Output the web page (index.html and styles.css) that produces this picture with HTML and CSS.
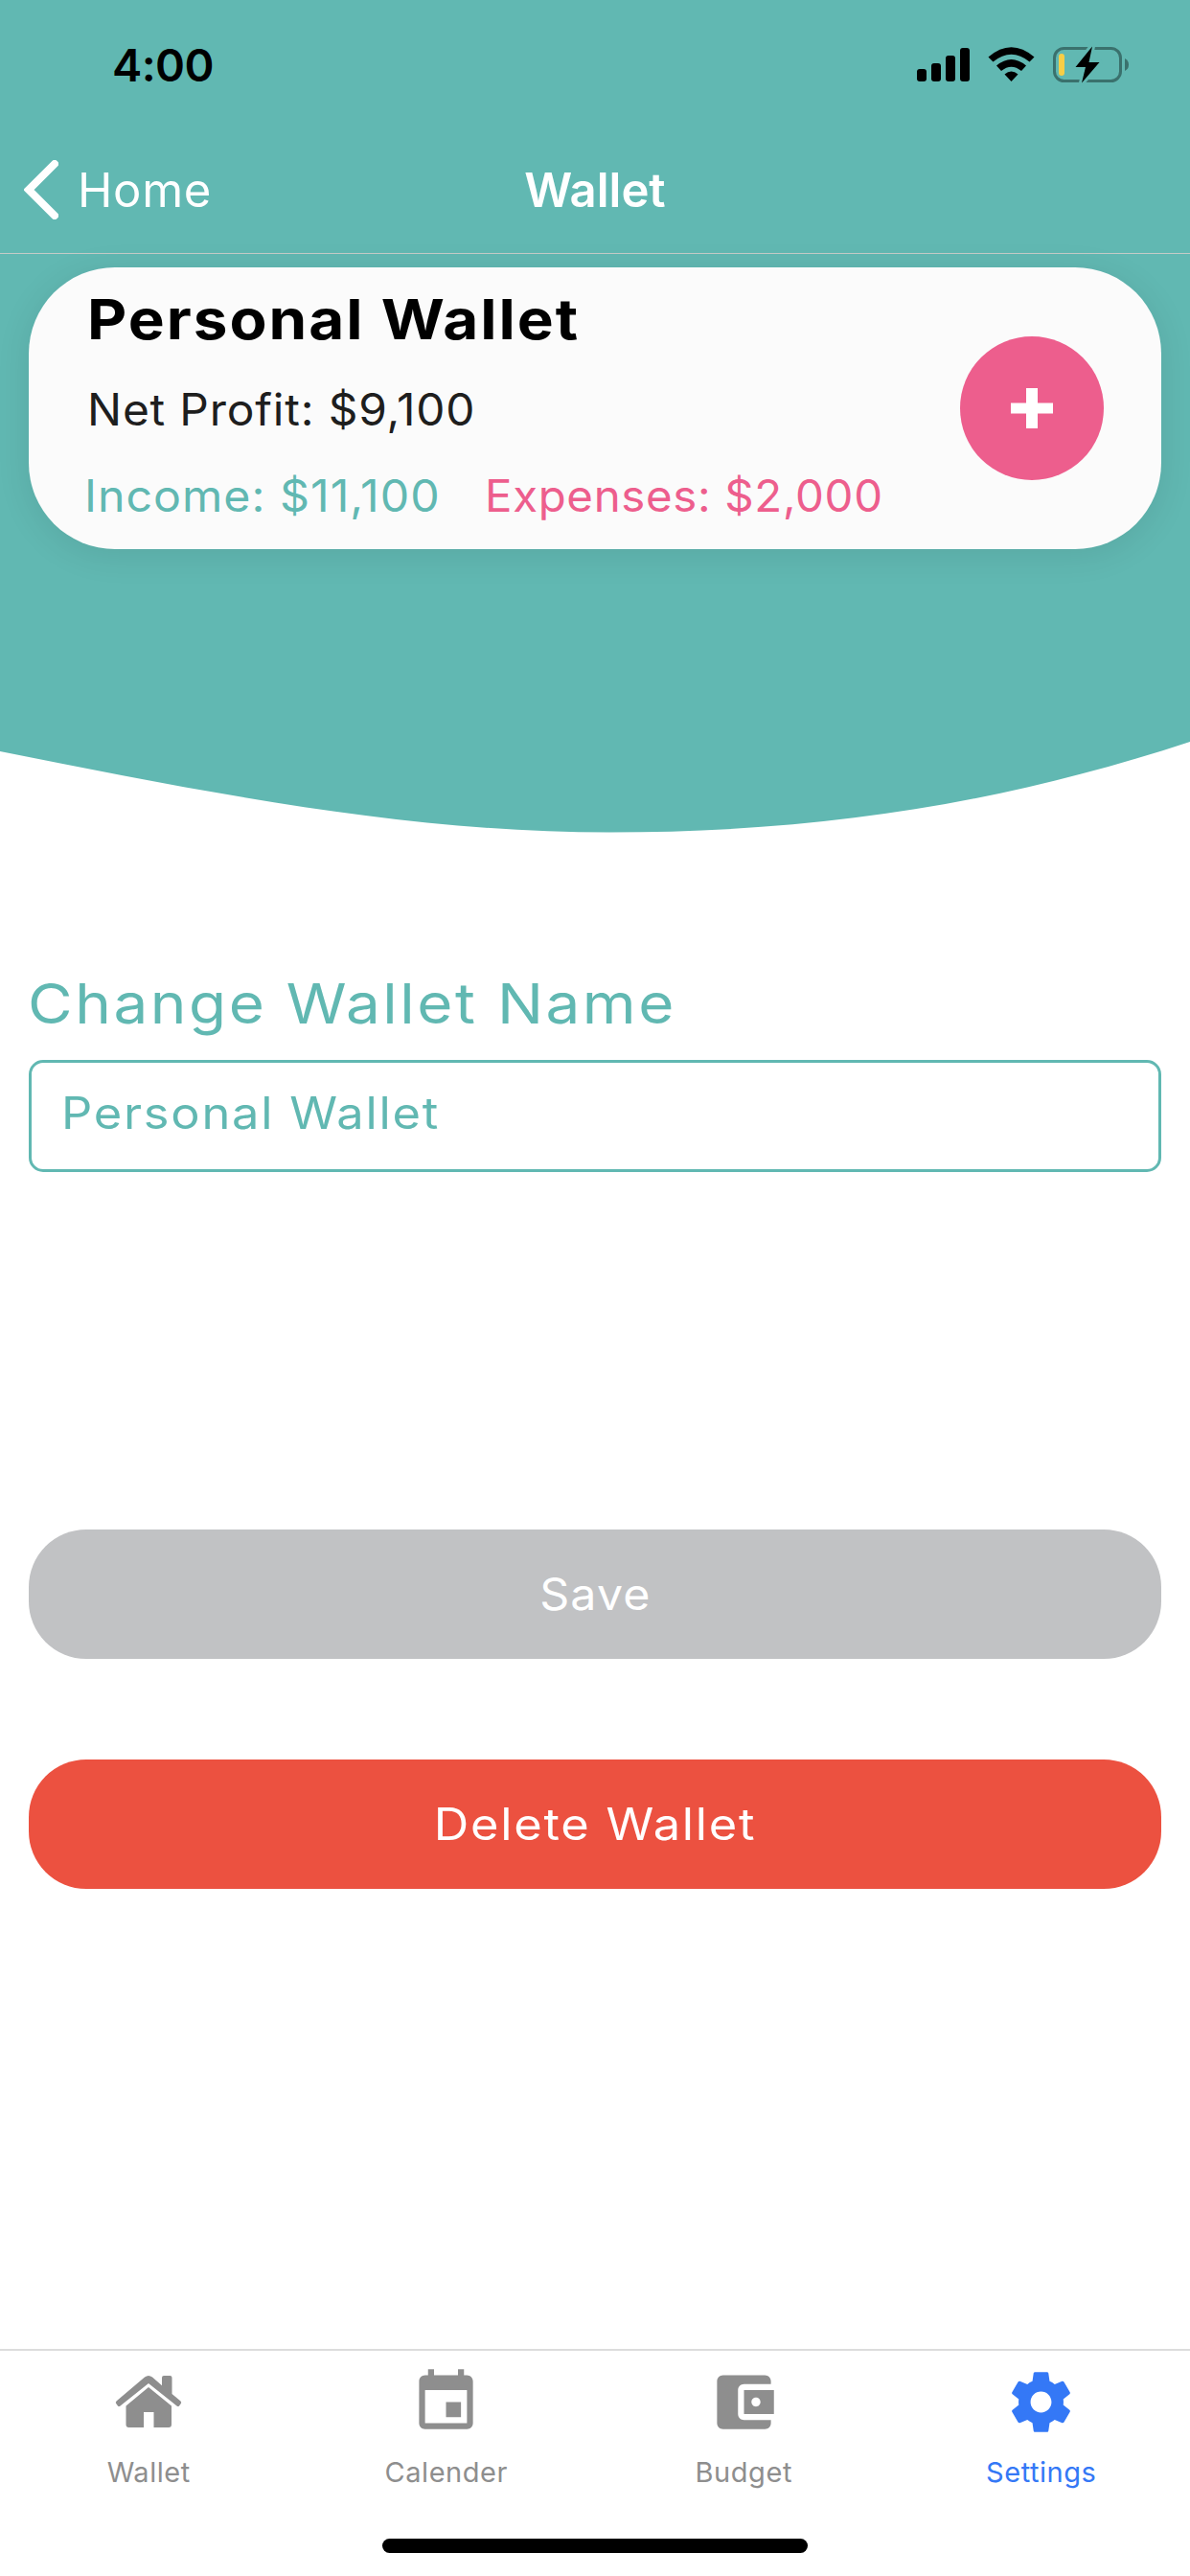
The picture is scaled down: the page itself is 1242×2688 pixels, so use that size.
FILE: index.html
```html
<!DOCTYPE html>
<html lang="en">
<head>
<meta charset="utf-8">
<title>Wallet</title>
<link rel="stylesheet" href="styles.css">
</head>
<body>
<div class="screen">
  <header class="top">
    <div class="status">
      <span class="time">4:00</span>
      <svg class="status-icons" width="222" height="44" viewBox="957 46 222 44">
        <rect x="957" y="72" width="10" height="13" rx="3"/>
        <rect x="972" y="66" width="10" height="19" rx="3"/>
        <rect x="987" y="58" width="10" height="27" rx="3"/>
        <rect x="1002" y="50" width="10" height="35" rx="3"/>
        <path d="M1031.500 59.500Q1055.500 39 1079.500 59.500L1074.500 64.500Q1055.500 49 1036.500 64.500Z"/>
        <path d="M1040 68.500Q1055.500 55.500 1071 68.500L1066 74Q1055.500 65.500 1045 74Z"/>
        <path d="M1048.500 77.500Q1055.500 71.500 1062.500 77.500L1055.500 85Z"/>
        <rect class="battery" x="1100.500" y="50.500" width="69" height="34" rx="10"/>
        <path class="battery-cap" d="M1174 61q4 2 4 6.500t-4 6.500z"/>
        <rect class="charge" x="1105" y="56" width="6" height="23" rx="3"/>
        <path class="bolt" d="M1140 48.500L1122.500 70H1133L1129 86.500L1147.500 65H1136.500Z"/>
      </svg>
    </div>
    <nav class="nav">
      <a class="back"><svg width="36" height="62" viewBox="0 0 36 62"><path d="M32 4L5 31L32 58"/></svg><span>Home</span></a>
      <h1 class="nav-title">Wallet</h1>
    </nav>
  </header>
  <section class="hero">
    <svg class="wave" width="1242" height="604" viewBox="0 265 1242 604"><path d="M0 265V784C212 826 420 868.500 636 868.500S1041 840 1242 774V265Z"/></svg>
    <div class="card">
      <div class="summary">
        <h2 class="wallet-name"><span class="wide">Personal Wallet</span></h2>
        <p class="profit"><span class="wide">Net Profit: $9,100</span></p>
        <p class="flows"><span class="income wide">Income: $11,100</span><span class="expenses wide">Expenses: $2,000</span></p>
      </div>
      <button class="add"><svg width="44" height="42" viewBox="0 0 44 42"><path d="M16 0h12v15.500h16v11H28V42H16V26.500H0v-11h16z"/></svg></button>
    </div>
  </section>
  <main class="form">
    <label class="label" for="name"><span class="wide">Change Wallet Name</span></label>
    <div class="field" id="name"><span class="wide">Personal Wallet</span></div>
    <button class="btn save"><span class="wide">Save</span></button>
    <button class="btn delete"><span class="wide">Delete Wallet</span></button>
  </main>
  <footer class="tabs">
    <div class="tab-row">
      <a class="tab"><svg width="75" height="75" viewBox="117.500 2469 75 75"><path d="M150.500 2480.500q4-3 8 0l10 8.700v-8.200q0-2 2-2h6.500q2 0 2 2v17l9 7.500q1.500 1.500 0 3l-1.500 2q-1 1-2.500 0L154.500 2487 125 2510.500q-1.500 1-2.500 0l-1.500-2q-1.500-1.500 0-3z M154.500 2491l24 19.500v19.500q0 3-3 3H160v-16h-10.500v16H134q-3 0-3-3v-19.500z"/></svg><span>Wallet</span></a>
      <a class="tab"><svg width="75" height="75" viewBox="0 0 24 24"><path d="M17 12h-5v5h5v-5zM16 1v2H8V1H6v2H5c-1.110 0-1.990.9-1.990 2L3 19c0 1.100.89 2 2 2h14c1.100 0 2-.9 2-2V5c0-1.100-.9-2-2-2h-1V1h-2zm3 18H5V8h14v11z"/></svg><span>Calender</span></a>
      <a class="tab"><svg width="75" height="75" viewBox="0 0 24 24"><path d="M21 18v1c0 1.100-.9 2-2 2H5c-1.110 0-2-.9-2-2V5c0-1.100.89-2 2-2h14c1.100 0 2 .9 2 2v1h-9c-1.110 0-2 .9-2 2v8c0 1.100.89 2 2 2h9zm-9-2h10V8H12v8zm4-2.500c-.83 0-1.500-.67-1.500-1.500s.67-1.500 1.500-1.500 1.500.67 1.500 1.500-.67 1.500-1.500 1.500z"/></svg><span>Budget</span></a>
      <a class="tab active"><svg width="75" height="75" viewBox="0 0 24 24"><path d="M19.430 12.980c.04-.32.07-.64.07-.98s-.03-.66-.07-.98l2.110-1.650c.19-.15.24-.42.12-.64l-2-3.460c-.12-.22-.39-.3-.61-.22l-2.490 1c-.52-.4-1.080-.73-1.690-.98l-.38-2.650C14.460 2.180 14.250 2 14 2h-4c-.25 0-.46.18-.49.42l-.38 2.650c-.61.25-1.170.59-1.690.98l-2.490-1c-.23-.09-.49 0-.61.22l-2 3.460c-.13.22-.07.49.12.64l2.110 1.650c-.04.32-.07.65-.07.98s.03.66.07.98l-2.110 1.650c-.19.15-.24.42-.12.64l2 3.460c.12.22.39.3.61.22l2.490-1c.52.4 1.080.73 1.690.98l.38 2.650c.03.24.24.42.49.42h4c.25 0 .46-.18.49-.42l.38-2.650c.61-.25 1.170-.59 1.690-.98l2.490 1c.23.09.49 0 .61-.22l2-3.460c.12-.22.07-.49-.12-.64l-2.110-1.650zM12 15.500c-1.930 0-3.500-1.570-3.500-3.500s1.570-3.500 3.500-3.500 3.500 1.570 3.500 3.500-1.570 3.500-3.500 3.500z"/></svg><span>Settings</span></a>
    </div>
    <div class="home-indicator"></div>
  </footer>
</div>
</body>
</html>
```
FILE: styles.css
```css
* { box-sizing: border-box; margin: 0; padding: 0; }
body { background: #fff; font-family: Inter, "Liberation Sans", sans-serif; color: #000; }
button { border: 0; font: inherit; }
svg { display: block; flex: none; }
.screen { width: 1242px; height: 2688px; display: flex; flex-direction: column; overflow: hidden; }

/* Status bar and navigation */
.top { height: 265px; background: #61b8b2; border-bottom: 1px solid #c4cbc7; flex: none; }
.status { height: 132px; padding: 38px 63px 0 117px; display: flex; justify-content: space-between; align-items: flex-start; }
.time { font-size: 47px; line-height: 60px; font-weight: 600; letter-spacing: -0.6px; }
.status-icons { margin-top: 8px; }
.battery { fill: none; stroke: #3a716d; stroke-width: 3; }
.battery-cap { fill: #3a716d; }
.charge { fill: #f7ce46; }
.bolt { stroke: #61b8b2; stroke-width: 6; stroke-linejoin: round; paint-order: stroke; }
.nav { height: 132px; display: grid; grid-template-columns: 1fr auto 1fr; align-items: center; color: #fff; padding: 0 25px; }
.back { display: flex; align-items: center; gap: 20px; }
.back path { fill: none; stroke: #fff; stroke-width: 8; stroke-linecap: round; stroke-linejoin: miter; }
.back span { font-size: 49px; line-height: 62px; letter-spacing: 0.7px; padding-top: 2px; }
.nav-title { font-size: 49px; font-weight: 600; line-height: 62px; padding-top: 1px; }

/* Extended letterforms for the display text */
.wide { display: inline-block; transform-origin: left center; white-space: nowrap; }

/* Wallet summary */
.hero { height: 604px; display: grid; flex: none; }
.wave { grid-area: 1 / 1; fill: #61b8b2; }
.card { grid-area: 1 / 1; margin: 14px 30px 0; height: 294px; padding: 0 60px 0 61px; border-radius: 90px; background: #fbfbfb; box-shadow: 0 6px 36px rgba(0,0,0,.09); display: flex; justify-content: space-between; align-items: center; }
.summary { align-self: flex-start; padding-top: 18px; white-space: nowrap; }
.wallet-name { font-size: 58px; line-height: 72px; font-weight: 700; }
.wallet-name .wide { transform: scaleX(1.1); letter-spacing: 1.8px; }
.profit { font-size: 46px; line-height: 60px; margin-top: 28px; color: #1e1e1e; }
.profit .wide { transform: scaleX(1.04); letter-spacing: 0.8px; }
.flows { display: flex; font-size: 46px; line-height: 60px; margin: 30px 0 0 -3px; }
.income { color: #61b8b2; width: 418px; transform: scaleX(1.05); letter-spacing: 0.95px; }
.expenses { color: #ed5e8d; transform: scaleX(1.03); letter-spacing: 0.65px; }
.add { width: 150px; height: 150px; border-radius: 50%; background: #ed5e8d; display: grid; place-items: center; }
.add svg { fill: #fff; }

/* Settings form */
.form { flex: 1; display: flex; flex-direction: column; padding: 141px 30px 0; }
.label { color: #61b8b2; font-size: 58px; line-height: 74px; height: 96px; margin-left: -1px; }
.label .wide { transform: scaleX(1.1); letter-spacing: 2.3px; }
.field { height: 117px; border: 3px solid #61b8b2; border-radius: 15px; padding: 0 31px; color: #61b8b2; font-size: 46px; line-height: 105px; }
.field .wide { transform: scaleX(1.1); letter-spacing: 1.6px; }
.btn { height: 135px; border-radius: 60px; color: #fff; font-size: 46px; line-height: 135px; }
.btn .wide { transform-origin: center; transform: scaleX(1.1); letter-spacing: 1.6px; }
.save { background: #c1c2c4; margin-top: 373px; }
.save .wide { transform: scaleX(1.05); letter-spacing: 1.1px; }
.delete { background: #ec5140; margin-top: 105px; }

/* Tab bar */
.tabs { height: 237px; border-top: 2px solid #dcdcdc; flex: none; display: flex; flex-direction: column; align-items: center; }
.tab-row { width: 100%; height: 196px; display: grid; grid-template-columns: repeat(4, 1fr); }
.tab { display: flex; flex-direction: column; align-items: center; padding-top: 16px; color: #8e8e8e; font-size: 29px; line-height: 36px; letter-spacing: 0.55px; }
.tab span { margin-top: 18px; }
.tab svg { fill: currentColor; }
.tab.active { color: #3478f6; }
.home-indicator { width: 444px; height: 15px; border-radius: 8px; background: #000; }
```
